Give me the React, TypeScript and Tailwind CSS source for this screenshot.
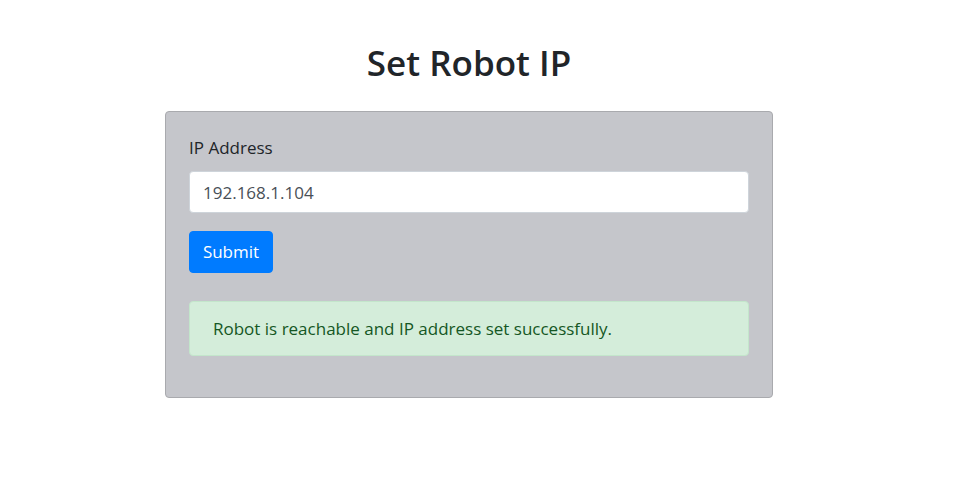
import { useState } from 'react'

export default function App() {
  const [ip, setIp] = useState('192.168.1.104')

  return (
    <div className="min-h-screen w-full bg-white text-[#212529] font-['Open_Sans','Noto_Sans',sans-serif]">
      <div className="ml-[165px] w-[608px] pt-[42px]">
        <h2 className="h-[42px] text-center text-[35px] leading-[42px] font-semibold">Set Robot IP</h2>

        <div className="mt-[27px] rounded-[4px] border border-[#a9aaae] bg-[#c5c6cb] p-[23px]">
          <label className="block h-[26px] text-[17px] leading-[26px]">IP Address</label>
          <input
            value={ip}
            onChange={(e) => setIp(e.target.value)}
            className="mt-[10px] block h-[42px] w-full rounded-[4px] border border-[#ced4da] bg-white px-[13px] text-[17px] text-[#495057] outline-none"
          />
          <button className="mt-[18px] block h-[42px] w-[84px] rounded-[4px] border border-[#007bff] bg-[#007bff] text-[17px] text-white">
            Submit
          </button>
          <div className="mt-[28px] mb-[18px] flex h-[55px] items-center rounded-[4px] border border-[#c3e6cb] bg-[#d4edda] px-[23px] text-[17px] text-[#155724]">
            Robot is reachable and IP address set successfully.
          </div>
        </div>
      </div>
    </div>
  )
}
